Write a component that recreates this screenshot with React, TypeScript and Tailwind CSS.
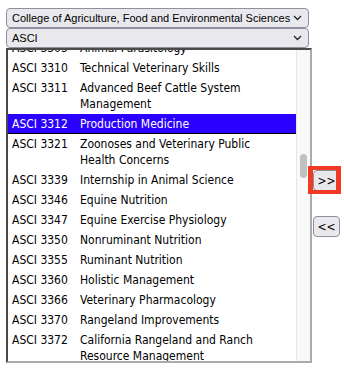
import React from "react";

const rows: [string, string][] = [
  ["ASCI 3305", "Animal Parasitology"],
  ["ASCI 3310", "Technical Veterinary Skills"],
  ["ASCI 3311", "Advanced Beef Cattle System Management"],
  ["ASCI 3312", "Production Medicine"],
  ["ASCI 3321", "Zoonoses and Veterinary Public Health Concerns"],
  ["ASCI 3339", "Internship in Animal Science"],
  ["ASCI 3346", "Equine Nutrition"],
  ["ASCI 3347", "Equine Exercise Physiology"],
  ["ASCI 3350", "Nonruminant Nutrition"],
  ["ASCI 3355", "Ruminant Nutrition"],
  ["ASCI 3360", "Holistic Management"],
  ["ASCI 3366", "Veterinary Pharmacology"],
  ["ASCI 3370", "Rangeland Improvements"],
  ["ASCI 3372", "California Rangeland and Ranch Resource Management"],
];

function Chevron() {
  return (
    <svg width="9" height="6" viewBox="0 0 9 6" className="shrink-0">
      <path d="M1 1 L4.5 4.5 L8 1" fill="none" stroke="#222" strokeWidth="1.3" />
    </svg>
  );
}

function Select({ label }: { label: string }) {
  return (
    <div
      className="flex h-[20px] w-[303px] items-center justify-between rounded-[4px] border border-[#8f8f9d] bg-[#e9e9ed] pl-[5px] pr-[6px] text-[11px] leading-none text-black"
      style={{ fontFamily: '"Liberation Sans", Arial, sans-serif' }}
    >
      <span className="whitespace-nowrap">{label}</span>
      <Chevron />
    </div>
  );
}

export default function App() {
  return (
    <div
      className="h-[368px] w-[344px] bg-white"
      style={{ fontFamily: '"DejaVu Sans Condensed", "DejaVu Sans", sans-serif' }}
    >
      <div className="flex pl-[6px] pt-[8px]">
        <div className="flex w-[306px] flex-col">
          <Select label="College of Agriculture, Food and Environmental Sciences" />
          <Select label="ASCI" />
          <div className="flex h-[315px] w-[306px] overflow-hidden border-[2px] border-t-[#4a4a4a] border-l-[#4a4a4a] border-r-[#ababab] border-b-[#ababab]">
            <div className="flex-1 overflow-hidden">
              <div className="-mt-[12px] flex flex-col text-[12px] leading-[16px] text-black">
                {rows.map(([code, name]) => {
                  const sel = code === "ASCI 3312";
                  return (
                    <div
                      key={code}
                      className={
                        sel
                          ? "flex bg-[#2a00ff] py-[2px] pl-[4px] pr-[14px] text-white shadow-[inset_0_-1px_0_#000]"
                          : "flex py-[2px] pl-[4px] pr-[14px]"
                      }
                    >
                      <span className="w-[68px] shrink-0 whitespace-nowrap">{code}</span>
                      <span className="flex-1">{name}</span>
                    </div>
                  );
                })}
              </div>
            </div>
            <div className="relative w-[14px] shrink-0 border-l border-[#e6e6e6] bg-[#f9f9f9]">
              <div className="absolute left-[3px] top-[104px] h-[24px] w-[7px] rounded-full bg-[#c1c1c1]" />
            </div>
          </div>
        </div>
        <div className="flex flex-col pl-[1px] pt-[162px]">
          <div className="relative">
            <button className="flex h-[21px] w-[27px] items-center justify-center rounded-[4px] border border-[#8f8f9d] bg-[#e9e9ed] text-[12px] leading-none text-black">
              &gt;&gt;
            </button>
            <div className="pointer-events-none absolute left-[-5px] top-[-4px] h-[28px] w-[33px] border-y-[4px] border-x-[5px] border-[#f03a24]" />
          </div>
          <button className="mt-[25px] flex h-[21px] w-[27px] items-center justify-center rounded-[4px] border border-[#8f8f9d] bg-[#e9e9ed] text-[12px] leading-none text-black">
            &lt;&lt;
          </button>
        </div>
      </div>
    </div>
  );
}
